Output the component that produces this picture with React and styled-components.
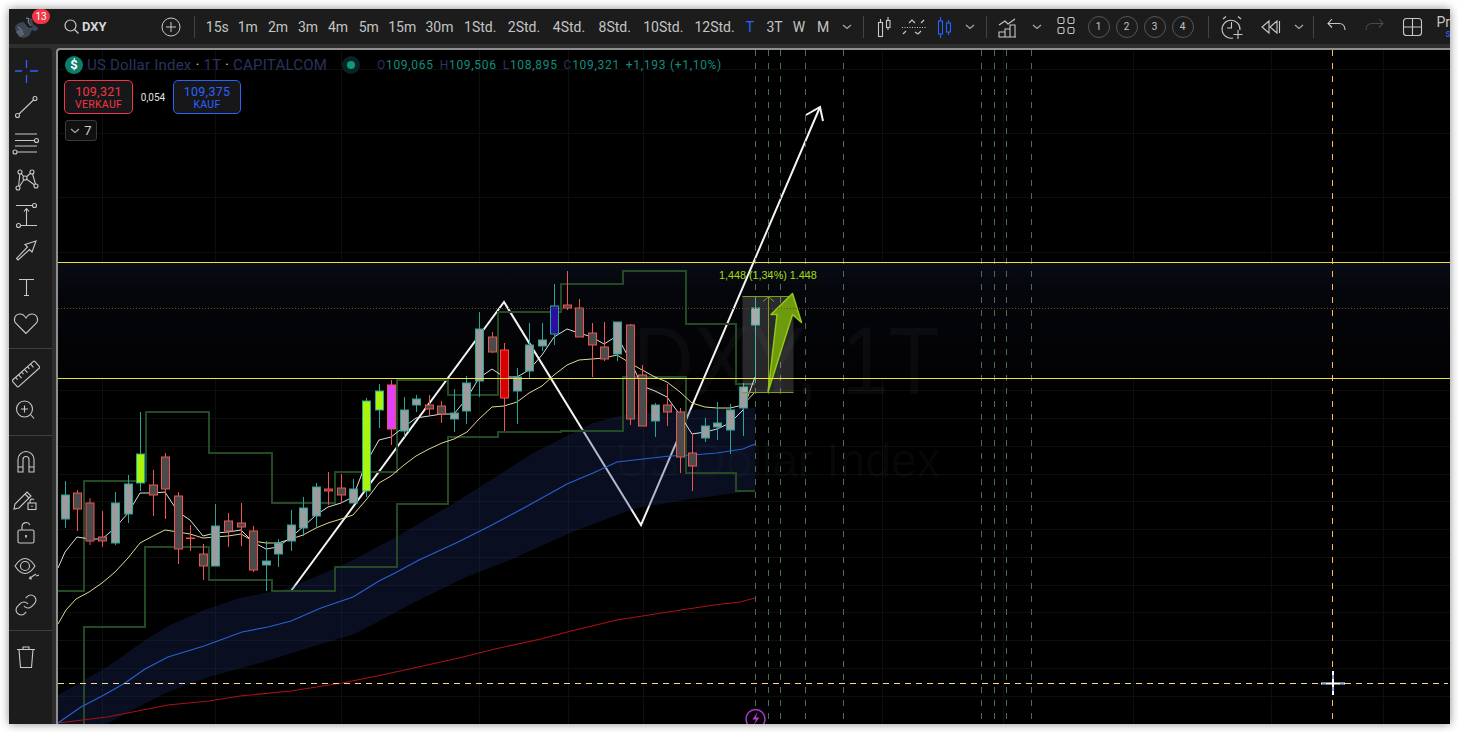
import React from 'react';
import styled, { createGlobalStyle } from 'styled-components';

const GlobalStyle = createGlobalStyle`
    html, body {
        margin: 0;
        padding: 0;
        background: #fff;
    }
    * { box-sizing: border-box; }
`;

const Page = styled.div`
    width: 1458px;
    height: 732px;
    padding: 9px 8px 8px 9px;
    overflow: hidden;
    background: #fff;
`;

const Window = styled.div`
    width: 100%;
    height: 100%;
    display: flex;
    flex-direction: column;
    overflow: hidden;
    background: #2e2e2e;
    box-shadow: 0 0 9px rgba(0, 0, 0, 0.45);
    font-family: Roboto, "Liberation Sans", sans-serif;
`;

const TopBar = styled.div`
    height: 35px;
    flex: none;
    display: flex;
    align-items: center;
    background: #1c1c1c;
    color: #c8c8c8;
`;

const Slot = styled.div`
    flex: none;
    width: ${props => props.$w}px;
    height: 100%;
    margin-left: ${props => props.$ml || 0}px;
    display: flex;
    align-items: center;
    justify-content: center;
`;

const AvatarSlot = styled(Slot)`
    position: relative;
    justify-content: flex-start;
    padding-left: 3px;
`;

const Badge = styled.span`
    position: absolute;
    left: 23px;
    top: 0;
    width: 18px;
    height: 15px;
    border-radius: 8px;
    background: #f23645;
    color: #fff;
    font-size: 10px;
    line-height: 15px;
    text-align: center;
`;

const SearchBox = styled(Slot)`
    justify-content: flex-start;
    padding-left: 9px;
    gap: 3px;
`;

const Ticker = styled.span`
    font-size: 13px;
    font-weight: 700;
    color: #d6d6d6;
`;

const Divider = styled.span`
    flex: none;
    width: 1px;
    height: 22px;
    margin-left: ${props => props.$ml || 0}px;
    background: #434343;
`;

const TimeButton = styled.button`
    flex: none;
    width: ${props => props.$w}px;
    height: 100%;
    margin-left: ${props => props.$ml || 0}px;
    padding: 0;
    border: 0;
    background: none;
    color: ${props => props.$active ? '#2962ff' : '#c4c4c4'};
    font-family: inherit;
    font-size: 14px;
    white-space: nowrap;
`;

const NumberRow = styled.div`
    flex: none;
    display: flex;
    gap: 6px;
    margin-left: 4px;
`;

const NumberCircle = styled.span`
    width: 22px;
    height: 22px;
    border: 1px solid #555;
    border-radius: 50%;
    color: #c4c4c4;
    font-size: 10px;
    line-height: 20px;
    text-align: center;
`;

const ProfileText = styled.div`
    flex: none;
    margin-left: 4px;
    font-size: 14px;
    line-height: 14px;
    color: #c4c4c4;
    white-space: nowrap;

    span {
        display: block;
        margin-left: 9px;
        font-size: 10px;
        line-height: 10px;
        color: #2962ff;
    }
`;

const Body = styled.div`
    flex: 1;
    min-height: 0;
    display: flex;
    padding-top: 4px;
`;

const Sidebar = styled.div`
    flex: none;
    width: 43px;
    display: flex;
    flex-direction: column;
    align-items: stretch;
    padding-top: 5px;
    background: #1c1c1c;
    border-top-right-radius: 4px;
`;

const SideButton = styled.div`
    height: 36px;
    flex: none;
    display: flex;
    align-items: center;
    justify-content: center;
    padding-right: 9px;
    color: #c8c8c8;
`;

const SideDivider = styled.div`
    height: 1px;
    flex: none;
    margin: 7px 0 7px 0;
    background: #3e3e3e;
`;

const ChartPane = styled.div`
    flex: 1;
    min-width: 0;
    margin-left: 4px;
    position: relative;
    overflow: hidden;
    background: #000;
    border-left: 2px solid #8e8e8e;
    border-top: 2px solid #8e8e8e;
    border-top-left-radius: 4px;
`;

const ChartSvg = styled.svg`
    display: block;
    width: 1392px;
    height: 674px;
`;

const Legend = styled.div`
    position: absolute;
    left: 6px;
    top: 5px;
    display: flex;
    flex-direction: column;
    align-items: flex-start;
`;

const TitleRow = styled.div`
    height: 20px;
    padding-left: 1px;
    display: flex;
    align-items: center;
`;

const SymbolLogo = styled.span`
    width: 18px;
    height: 18px;
    border-radius: 50%;
    background: #0b7f6b;
    color: #fff;
    font-size: 13px;
    font-weight: 700;
    line-height: 18px;
    text-align: center;
`;

const SymbolName = styled.span`
    margin-left: 4px;
    width: 240px;
    font-size: 15px;
    letter-spacing: 0.22px;
    color: #28345c;
    white-space: nowrap;

    b {
        font-weight: 400;
        color: #c0c0c0;
    }
`;

const StatusDot = styled.span`
    width: 18px;
    height: 18px;
    margin-left: 15px;
    border-radius: 50%;
    background: #0b2320;
    display: flex;
    align-items: center;
    justify-content: center;

    &::after {
        content: '';
        width: 8px;
        height: 8px;
        border-radius: 50%;
        background: #0b9981;
    }
`;

const Ohlc = styled.span`
    margin-left: 17px;
    display: flex;
    gap: 6px;
    font-size: 12px;
    letter-spacing: 0.7px;
    color: #0e8f80;
    white-space: nowrap;

    i {
        font-style: normal;
        color: #28345c;
    }
`;

const TradeRow = styled.div`
    margin-top: 5px;
    display: flex;
    align-items: center;
`;

const TradeBox = styled.div`
    width: ${props => props.$w}px;
    height: 34px;
    border: 1px solid ${props => props.$color};
    border-radius: 5px;
    background: #17171a;
    color: ${props => props.$color};
    display: flex;
    flex-direction: column;
    align-items: center;
    padding-top: 3px;
    font-size: 12.5px;
    line-height: 15px;
    letter-spacing: 0.3px;

    small {
        font-size: 10.5px;
        line-height: 12px;
    }
`;

const Spread = styled.span`
    width: 40px;
    text-align: center;
    font-size: 10px;
    color: #e0e0e0;
`;

const CollapseBox = styled.div`
    margin: 6px 0 0 1px;
    width: 32px;
    height: 21px;
    border: 1px solid #3a3a3a;
    border-radius: 3px;
    background: #101010;
    color: #d0d0d0;
    display: flex;
    align-items: center;
    justify-content: center;
    gap: 4px;
    font-size: 13px;
`;

// label, width, active, left margin
const timeframes = [
    ['15s', 30.5], ['1m', 30.5], ['2m', 30], ['3m', 30], ['4m', 30], ['5m', 31.5],
    ['15m', 35.5], ['30m', 39], ['1Std.', 42.5], ['2Std.', 45], ['4Std.', 45], ['8Std.', 46.5],
    ['10Std.', 50.5], ['12Std.', 44, false, 4], ['T', 27, true], ['3T', 22], ['W', 27], ['M', 21],
];

const Chevron = () => (
    <svg width="10" height="6" viewBox="0 0 10 6" fill="none" stroke="#a8a8a8" strokeWidth="1.2">
        <path d="M1 1l4 3.5L9 1" />
    </svg>
);

const Icon = ({ size = 28, children, color = 'currentColor', width = 1.1 }) => (
    <svg width={size} height={size} viewBox="0 0 28 28" fill="none" stroke={color} strokeWidth={width}>
        {children}
    </svg>
);

const Avatar = () => (
    <svg width="28" height="24" viewBox="0 0 28 24">
        <path d="M3 12c2-4 6-5 9-5l3-5 5 2 1 5 5 4-2 3-4-1-3 6-5 2-5-1-3-5z" fill="#3d4550" />
        <path d="M11 6l3-4 4 2-1 4 4 4-4 1-3-3z" fill="#181c22" />
        <path d="M14 3l3 1-1 3 3 4M6 12l4 3 1 5M20 13l5 1" stroke="#8a929c" strokeWidth="1" fill="none" />
        <path d="M4 17l5-4 3 6-3 3z" fill="#59636e" />
        <path d="M20 12l6 1-2 3-4-1z" fill="#36465e" />
    </svg>
);

const chartIcons = {
    candles: (
        <>
            <rect x="10.5" y="9.5" width="4" height="14" />
            <path d="M12.5 9V6" />
            <rect x="18.5" y="7.5" width="3.5" height="7" />
            <path d="M20 7.5V4M20 14.5V17" />
        </>
    ),
    pattern: (
        <>
            <path d="M2 14.5h24" strokeDasharray="1 1.5" />
            <path d="M9 10l3-3 3 3M15 19l3 2 3-3M24 7l-3 3M6 18l-3 3" />
        </>
    ),
    chart: (
        <>
            <path d="M5 12l6-4 3 3 7-5" />
            <path d="M5 24v-5h6v5zM11 24v-8h5v8zM16 24V12h5v12zM5 24h17" />
        </>
    ),
    grid: (
        <>
            <rect x="6" y="4.5" width="6" height="6" rx="1.5" />
            <rect x="16" y="4.5" width="6" height="6" rx="1.5" />
            <rect x="6" y="14.5" width="6" height="6" rx="1.5" />
            <rect x="16" y="14.5" width="6" height="6" rx="1.5" />
        </>
    ),
    alarm: (
        <>
            <path d="M22 17a9 9 0 1 0-7 8" />
            <path d="M13.5 9v6H9M5 6l3-2.5M23 6l-3-2.5" />
            <path d="M20 17v9M15.5 21.5h9" />
        </>
    ),
    rewind: <path d="M13 8v12l-7-6zM21 8v12l-7-6zM23.5 8v12" transform="translate(-1 0)" />,
    undo: <path d="M9 7l-4 4.500 4 4M5 11.500h11c4 0 6 3 6 6.500" transform="translate(0 -1)" />,
    layout: (
        <>
            <rect x="4.500" y="5.500" width="18" height="17" rx="3" />
            <path d="M13.500 5.500v17M4.500 14h18" />
        </>
    ),
};

const sideIcons = {
    cross: (
        <path d="M3 14h7M18 14h8M14.500 3v8M14.500 18v8" stroke="#2962ff" strokeWidth="1.300" />
    ),
    line: (
        <>
            <circle cx="5.500" cy="22.500" r="2" />
            <circle cx="23" cy="5.500" r="2" />
            <path d="M7 21L21.500 7" />
        </>
    ),
    fib: (
        <>
            <path d="M3 5h22M3 11.500h19.500M3 17h22M5 23h20" />
            <circle cx="24.500" cy="11.500" r="2" />
            <circle cx="3" cy="23" r="2" />
        </>
    ),
    pattern: (
        <>
            <path d="M6.500 23L8 7 13 13 20 7 24 21M6.500 23L13 13 24 21" />
            <circle cx="8" cy="7" r="2" fill="#1c1c1c" />
            <circle cx="20" cy="7" r="2" fill="#1c1c1c" />
            <circle cx="13" cy="13" r="2" fill="#1c1c1c" />
            <circle cx="6" cy="23" r="2" fill="#1c1c1c" />
            <circle cx="24" cy="21" r="2" fill="#1c1c1c" />
        </>
    ),
    measure: (
        <>
            <path d="M4 4.500h16M9 24.500h16M14.500 24V8M12 10.500l2.500-3 2.500 3" />
            <circle cx="22.500" cy="4.500" r="2" />
            <circle cx="6.500" cy="24.500" r="2" />
        </>
    ),
    arrow: <path d="M24 4l-11 3.500 2.500 2.500L4.500 21.500 6 23l11.500-10.500 2.500 2.500z" />,
    text: <path d="M7 6.500h15M14.500 6.500v16M12 22.500h5" />,
    heart: (
        <path d="M14 24.500L4 14.500C1 11 2.500 5.500 7.500 5c3-.3 5 1.500 6.500 4 1.500-2.500 3.500-4.300 6.500-4 5 .5 6.500 6 3.500 9.500z" />
    ),
    ruler: (
        <g transform="rotate(-42 14 14)">
            <rect x="-1" y="9.500" width="30" height="9" rx="1" />
            <path d="M4 9.500v3M8 9.500v4.500M12 9.500v3M16 9.500v4.500M20 9.500v3M24 9.500v4.500" />
        </g>
    ),
    zoom: (
        <>
            <circle cx="12.500" cy="13" r="8" />
            <path d="M18.500 18.500L22 22.500M12.500 9.500v7M9 13h7" />
        </>
    ),
    magnet: (
        <>
            <path d="M6 25V12.500a8 8 0 0 1 16 0V25h-5V12.500a3 3 0 0 0-6 0V25z" />
            <path d="M6 20h5M17 20h5" />
        </>
    ),
    pencilLock: (
        <>
            <path d="M3 21l-1 5 5-1L19 13l-4-4zM13 11l4 4" />
            <rect x="16" y="20" width="8" height="6.500" />
            <path d="M18 20v-2a2.200 2.200 0 0 1 4 -1" />
            <path d="M20 22.500v1.500" />
        </>
    ),
    lock: (
        <>
            <rect x="6" y="11" width="16" height="13" rx="1.500" />
            <path d="M10 11V7.500a4.200 4.200 0 0 1 8-1.500" />
            <path d="M14 16v2.500" strokeWidth="1.800" />
        </>
    ),
    eye: (
        <>
            <path d="M3 11c3.500-5.500 7-7.500 10-7.500s6.500 2 10 7.500c-3.500 5.500-7 7.500-10 7.500S6.500 16.500 3 11z" />
            <circle cx="13" cy="11" r="4.500" />
            <path d="M18 23l6-4M20 24l-2.500-.5 1-2M24 21l3-1" />
        </>
    ),
    link: (
        <g transform="translate(2 2)">
            <path d="M10 13a5 5 0 0 0 7.540.540l3-3a5 5 0 0 0-7.070-7.070l-1.720 1.710" />
            <path d="M14 11a5 5 0 0 0-7.540-.540l-3 3a5 5 0 0 0 7.070 7.070l1.710-1.710" />
        </g>
    ),
    trash: <path d="M5 7.500h18M11 7.500V5h6v2.500M7 7.500l1.500 18h11L21 7.500" />,
};

const sideGroups = [
    ['cross', 'line', 'fib', 'pattern', 'measure', 'arrow', 'text', 'heart'],
    ['ruler', 'zoom'],
    ['magnet', 'pencilLock', 'lock', 'eye', 'link'],
    ['trash'],
];

const candleColors = {
    u: ['#9c9c9c', '#26a69a'],
    d: ['#4b4b4b', '#f05350'],
    l: ['#aaf50a', '#26a69a'],
    m: ['#e040fb', '#f05350'],
    b: ['#2a0fa0', '#26a69a'],
    r: ['#d50000', '#f05350'],
};

// x, wick top, wick bottom, body top, body bottom, kind
const candles = [
    [65.5, 481, 528, 495, 519, 'u'], [77.5, 490, 531, 493, 509, 'd'], [90, 498, 545, 503, 541, 'd'],
    [102.5, 511, 547, 537, 541, 'd'], [115.5, 492, 545, 503, 543, 'u'], [128.5, 475, 523, 484, 514, 'u'],
    [140.5, 412, 491, 454, 483, 'l'], [153.5, 470, 516, 485, 495, 'd'], [165.5, 453, 519, 457, 489, 'd'],
    [178.5, 492, 564, 496, 549, 'd'], [190.5, 525, 551, 538, 538.5, 'd'], [203.5, 544, 580, 554, 566, 'd'],
    [215.5, 504, 566, 526, 566, 'u'], [228.5, 513, 547, 521, 531, 'd'], [241.5, 503, 546, 523, 527, 'd'],
    [253.5, 526, 572, 531, 570, 'd'], [266.5, 541, 591, 561, 565, 'u'], [278.5, 539, 567, 543, 554, 'u'],
    [291.5, 510, 551, 525, 541, 'u'], [303.5, 497, 536, 508, 528, 'u'], [316.5, 483, 528, 487, 516, 'u'],
    [328.5, 472, 505, 489, 491, 'd'], [341.5, 474, 503, 488, 495, 'd'], [353.5, 479, 503, 489, 503, 'u'],
    [366.5, 398, 497, 401, 491, 'l'], [379.5, 384, 428, 391, 410, 'l'], [391.5, 380, 445, 385, 429, 'm'],
    [404.5, 397, 437, 410, 431, 'u'], [416.5, 395, 412, 399, 405, 'u'], [429.5, 395, 415, 405, 409, 'd'],
    [441.5, 401, 423, 406, 414, 'd'], [454.5, 389, 432, 413, 419, 'u'], [466.5, 376, 424, 383, 411, 'u'],
    [479.5, 312, 397, 329, 381, 'u'], [492.5, 332, 353, 337, 352, 'd'], [504.5, 343, 431, 350, 398, 'r'],
    [517.5, 368, 424, 377, 391, 'u'], [529.5, 323, 378, 345, 371, 'u'], [542.5, 323, 351, 340, 346, 'u'],
    [554.5, 284, 345, 306, 334, 'b'], [567.5, 271, 310, 305, 308, 'd'], [579.5, 299, 337, 308, 337, 'd'],
    [592.5, 323, 377, 333, 345, 'd'], [604.5, 322, 361, 347, 359, 'd'], [617.5, 322, 361, 322, 354, 'u'],
    [630.5, 324, 425, 325, 419, 'd'], [642.5, 365, 426, 375, 426, 'd'], [655.5, 403, 437, 405, 421, 'u'],
    [667.5, 384, 426, 405, 412, 'd'], [680.5, 408, 473, 412, 457, 'd'], [692.5, 433, 491, 453, 466, 'd'],
    [705.5, 418, 442, 426, 438, 'u'], [717.5, 402, 440, 423, 427, 'u'], [730.5, 404, 454, 410, 430, 'u'],
    [743.5, 383, 436, 387, 408, 'u'], [755.5, 296, 383, 308, 325, 'u'],
];

const whiteMa = '58,568 65,552 77,537 90,539 102,539 115,528 128,513 140,493 153,493 165,492 178,512 190,520 203,536 215,533 228,532 241,530 253,542 266,549 278,547 291,537 303,527 316,515 328,507 341,503 353,497 366,463 379,440 391,437 404,427 416,418 429,416 442,414 454,414 467,398 479,378 492,369 504,377 517,377 529,370 542,355 554,337 567,329 579,333 592,337 604,344 617,336 630,360 642,386 655,391 667,397 680,415 692,434 705,432 717,429 730,423 743,410 755,377';
const yellowMa = '58,624 66,610 76,599 89,592 102,583 115,572 128,558 140,543 153,536 165,530 178,532 190,534 203,538 215,537 228,536 241,534 253,541 266,543 278,543 291,539 303,535 316,528 328,523 341,519 353,515 366,500 379,483 391,476 404,465 416,456 429,449 442,443 454,439 467,432 479,419 492,407 504,406 517,402 529,393 542,386 554,375 567,365 579,360 592,359 604,358 617,355 630,363 642,370 655,377 667,382 680,392 692,403 705,407 717,408 730,408 743,405 755,392';
const blueMa = '58,723 81,707 104,695 125,683 145,669 168,657 204,646 242,632 268,627 291,621 321,608 353,597 379,581 395,573 419,560 456,543 490,526 522,509 567,484 593,473 617,462 643,459 670,456 692,455 717,453 743,449 755,444';
const redMa = '58,723 107,717 168,705 209,701 240,696 291,691 342,683 382,675 459,658 495,649 541,639 571,631 617,620 668,612 714,605 740,602 755,598';
const bandArea = '58,695 107,667 148,638 168,626 204,610 240,598 289,588 336,568 353,560 396,537 456,502 533,453 593,423 623,415 683,410 755,408 755,490 737,493 683,500 633,509 570,533 510,560 464,578 413,603 372,625 352,635 311,647 270,660 209,677 168,692 138,707 107,724 58,724';
const upperStairs = '58,591 84,591 84,481 146,481 146,412 209,412 209,453 272,453 272,503 335,503 335,472 397,472 397,380 448,380 448,395 498,395 498,312 561,312 561,284 623,284 623,271 686,271 686,324 736,324 736,384 755,384';
const lowerStairs = '84,724 84,627 145,627 145,547 209,547 209,580 272,580 272,591 335,591 335,567 397,567 397,504 448,504 448,437 498,437 498,432 561,432 561,431 623,431 623,377 686,377 686,473 736,473 736,491 755,491';

const gridX = [102, 215, 341, 479, 568, 643, 882, 1003, 1133, 1271, 1383];
const gridY = [69, 133, 197, 252, 307, 335, 363, 390, 418, 446, 474, 501, 529, 557, 585, 612, 640, 668, 696];
const dashedX = [755.5, 768.5, 780.5, 805.5, 843.5, 981.5, 994.5, 1006.5, 1031.5];

const ChartDrawing = () => (
    <ChartSvg viewBox="58 50 1392 674">
        <defs>
            <linearGradient id="zone" x1="0" y1="0" x2="0" y2="1">
                <stop offset="0" stopColor="#090c16" />
                <stop offset="0.25" stopColor="#05060b" />
                <stop offset="1" stopColor="#020203" />
            </linearGradient>
        </defs>

        {gridX.map(x => <path key={x} d={`M${x + 0.5} 50V724`} stroke="#0e0e0e" />)}
        {gridY.map(y => <path key={y} d={`M58 ${y + 0.5}H1450`} stroke="#0e0e0e" />)}

        <rect x="58" y="263" width="1392" height="115" fill="url(#zone)" />

        <text x="633" y="394" fontFamily="Liberation Sans, sans-serif" fontSize="96" textLength="307" lengthAdjust="spacingAndGlyphs" fill="#ffffff" fillOpacity="0.035">DXY, 1T</text>
        <text x="615" y="477" fontFamily="Liberation Sans, sans-serif" fontSize="48" textLength="325" lengthAdjust="spacingAndGlyphs" fill="#ffffff" fillOpacity="0.035">US Dollar Index</text>

        <polyline points="291,591 504,302 641,525 820,107" fill="none" stroke="#f4f4f4" strokeWidth="2" />
        <polyline points="806,115 820,107 823,121" fill="none" stroke="#f4f4f4" strokeWidth="2" />

        <polygon points={bandArea} fill="rgba(30, 50, 110, 0.3)" />

        <polyline points={upperStairs} fill="none" stroke="#234a25" strokeWidth="2" />
        <polyline points={lowerStairs} fill="none" stroke="#234a25" strokeWidth="2" />

        {dashedX.map(x => (
            <path key={x} d={`M${x} 50V724`} stroke="#4c6e50" strokeDasharray="6 7" />
        ))}

        <polyline points={redMa} fill="none" stroke="#a81212" strokeWidth="1.1" />
        <polyline points={blueMa} fill="none" stroke="#2a5fd0" strokeWidth="1.2" />
        <polyline points={yellowMa} fill="none" stroke="#e0d890" strokeWidth="1" />
        <polyline points={whiteMa} fill="none" stroke="#dedede" strokeWidth="1" />

        {candles.map(([x, top, bottom, bodyTop, bodyBottom, kind]) => {
            const [fill, edge] = candleColors[kind];
            return (
                <g key={x}>
                    <path d={`M${x} ${top}V${bottom}`} stroke={edge} />
                    <rect x={x - 4} y={bodyTop} width="8" height={bodyBottom - bodyTop} fill={fill} stroke={edge} />
                </g>
            );
        })}

        <rect x="742.5" y="296.5" width="51" height="96" fill="rgba(255, 255, 255, 0.15)" />
        <path d="M742.5 296.500H793.500M742.500 392.500H793.500M768.500 296.500V392.500" stroke="#7f9a1c" />
        <path d="M763 301.500l5.500-5 5.500 5" stroke="#7f9a1c" fill="none" />
        <polygon points="768,392 777,314.500 771,314.500 792.500,293.500 801.500,322.500 792.500,314.500" fill="#6e9a0e" stroke="#93c912" strokeWidth="1.500" strokeLinejoin="round" />
        <text x="719" y="279" fontFamily="Liberation Sans, sans-serif" fontSize="10.800" fill="#a6dc0c">1,448 (1,34%) 1.448</text>

        <path d="M58 262.500H1450M58 378.500H1450" stroke="#f0e23c" />
        <path d="M58 308.500H1450" stroke="#7a4a12" strokeDasharray="1 2" />

        <path d="M1332.500 50V724" stroke="#ffb85c" strokeDasharray="6 7" />
        <path d="M58 683.500H1448" stroke="#ffd694" strokeDasharray="6 5" />
        <path d="M1321 683.500H1345M1333 671V695" stroke="#fff" strokeWidth="2" />
        <path d="M1322 684H1326M1340 684H1344M1333 675V679M1333 687V691" stroke="#1746b8" />

        <circle cx="755.500" cy="719" r="9.500" fill="#0a000c" stroke="#a13dc0" strokeWidth="1.500" />
        <path d="M757.500 712l-5 7.500h3.500l-2 5 5.500-7h-3.500z" fill="#a844c8" />
    </ChartSvg>
);

const App = () => (
    <Page>
        <GlobalStyle />
        <Window>
            <TopBar>
                <AvatarSlot $w={46}>
                    <Avatar />
                    <Badge>13</Badge>
                </AvatarSlot>
                <SearchBox $w={105}>
                    <svg width="15" height="15" viewBox="0 0 15 15" fill="none" stroke="#c8c8c8" strokeWidth="1.200">
                        <circle cx="6.500" cy="6.500" r="5.500" />
                        <path d="M10.500 10.500L14.500 14.500" />
                    </svg>
                    <Ticker>DXY</Ticker>
                </SearchBox>
                <Slot $w={22}>
                    <svg width="20" height="20" viewBox="0 0 20 20" fill="none" stroke="#c8c8c8">
                        <circle cx="10" cy="10" r="9" />
                        <path d="M10 5v10M5 10h10" />
                    </svg>
                </Slot>
                <Divider $ml={12} />
                {timeframes.map(([label, w, active, ml], i) => (
                    <TimeButton key={label} $w={w} $ml={i === 0 ? 7 : ml} $active={active}>{label}</TimeButton>
                ))}
                <Slot $w={27}><Chevron /></Slot>
                <Divider $ml={2} />
                <Slot $w={32} $ml={2}><Icon>{chartIcons.candles}</Icon></Slot>
                <Slot $w={32}><Icon>{chartIcons.pattern}</Icon></Slot>
                <Slot $w={28}>
                    <Icon color="#2962ff">
                        <rect x="8.500" y="8" width="4" height="13" />
                        <path d="M10.500 4v4M10.500 21v4" />
                        <rect x="16.500" y="10" width="4" height="9" />
                        <path d="M18.500 7v3M18.500 19v3" />
                    </Icon>
                </Slot>
                <Slot $w={24}><Chevron /></Slot>
                <Divider $ml={4} />
                <Slot $w={36} $ml={3}><Icon>{chartIcons.chart}</Icon></Slot>
                <Slot $w={22}><Chevron /></Slot>
                <Slot $w={36}><Icon>{chartIcons.grid}</Icon></Slot>
                <NumberRow>
                    {[1, 2, 3, 4].map(n => <NumberCircle key={n}>{n}</NumberCircle>)}
                </NumberRow>
                <Divider $ml={14} />
                <Slot $w={36} $ml={5}><Icon>{chartIcons.alarm}</Icon></Slot>
                <Slot $w={42}><Icon>{chartIcons.rewind}</Icon></Slot>
                <Slot $w={14}><Chevron /></Slot>
                <Divider $ml={7} />
                <Slot $w={36} $ml={5}><Icon>{chartIcons.undo}</Icon></Slot>
                <Slot $w={38}>
                    <Icon color="#4a4a4a">
                        <g transform="matrix(-1 0 0 1 28 0)">{chartIcons.undo}</g>
                    </Icon>
                </Slot>
                <Slot $w={40}><Icon>{chartIcons.layout}</Icon></Slot>
                <ProfileText>Pr<span>s</span></ProfileText>
            </TopBar>
            <Body>
                <Sidebar>
                    {sideGroups.map((group, i) => (
                        <React.Fragment key={group[0]}>
                            {i > 0 && <SideDivider />}
                            {group.map(name => (
                                <SideButton key={name}>
                                    <Icon>{sideIcons[name]}</Icon>
                                </SideButton>
                            ))}
                        </React.Fragment>
                    ))}
                </Sidebar>
                <ChartPane>
                    <ChartDrawing />
                    <Legend>
                        <TitleRow>
                            <SymbolLogo>$</SymbolLogo>
                            <SymbolName>US Dollar Index <b>·</b> 1T <b>·</b> CAPITALCOM</SymbolName>
                            <StatusDot />
                            <Ohlc>
                                <span><i>O</i>109,065</span>
                                <span><i>H</i>109,506</span>
                                <span><i>L</i>108,895</span>
                                <span><i>C</i>109,321</span>
                                <span>+1,193 (+1,10%)</span>
                            </Ohlc>
                        </TitleRow>
                        <TradeRow>
                            <TradeBox $w={69} $color="#f23645">109,321<small>VERKAUF</small></TradeBox>
                            <Spread>0,054</Spread>
                            <TradeBox $w={68} $color="#2962ff">109,375<small>KAUF</small></TradeBox>
                        </TradeRow>
                        <CollapseBox>
                            <Chevron />
                            7
                        </CollapseBox>
                    </Legend>
                </ChartPane>
            </Body>
        </Window>
    </Page>
);

export default App;
